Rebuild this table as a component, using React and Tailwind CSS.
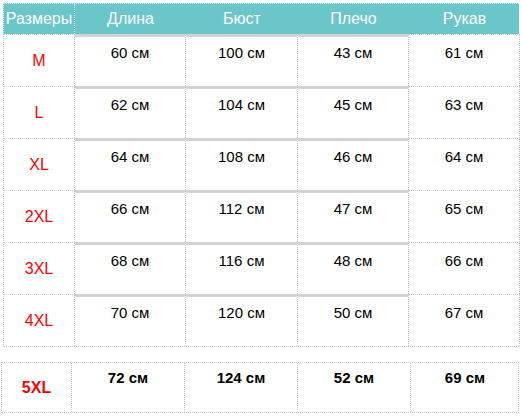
import React from "react";

const headers = ["Размеры", "Длина", "Бюст", "Плечо", "Рукав"];

const rows = [
  ["M", "60 см", "100 см", "43 см", "61 см"],
  ["L", "62 см", "104 см", "45 см", "63 см"],
  ["XL", "64 см", "108 см", "46 см", "64 см"],
  ["2XL", "66 см", "112 см", "47 см", "65 см"],
  ["3XL", "68 см", "116 см", "48 см", "66 см"],
  ["4XL", "70 см", "120 см", "50 см", "67 см"],
];

const last = ["5XL", "72 см", "124 см", "52 см", "69 см"];

const cols = "grid grid-cols-[71px_111px_112px_111px_111px]";

export default function App() {
  return (
    <div
      className="w-[522px] h-[418px] bg-white overflow-hidden"
      style={{ fontFamily: '"Liberation Sans", Arial, sans-serif' }}
    >
      <div className="ml-[3px] mt-[3px] w-[516px]">
        {/* header */}
        <div className={`${cols} h-[31px] bg-[#6bc6ca] border-t border-l border-dotted border-white/70`}>
          {headers.map((h, i) => (
            <div
              key={h}
              className={`flex items-center justify-center text-white text-[16px] ${
                i === 0 ? "border-r border-dotted border-white/70" : ""
              }`}
            >
              {h}
            </div>
          ))}
        </div>

        {/* body */}
        <div className="border-l border-b border-dotted border-[#c8c8c8]">
          {rows.map((r) => (
            <div key={r[0]} className={`${cols} h-[52px]`}>
              {r.map((c, i) => {
                const mid = i >= 1 && i <= 3;
                if (i === 0)
                  return (
                    <div
                      key={i}
                      className="border-t border-r border-dotted border-[#c8c8c8] flex items-center justify-center text-[#ff0000] text-[16px]"
                    >
                      {c}
                    </div>
                  );
                if (mid)
                  return (
                    <div key={i} className="border-r border-dotted border-[#c8c8c8]">
                      <div className="h-[3px] bg-[#d2d2d2]" />
                      <div className="text-center text-black text-[15px] leading-[17px] pt-[7px]">{c}</div>
                    </div>
                  );
                return (
                  <div
                    key={i}
                    className="border-t border-r border-dotted border-[#c8c8c8] text-center text-black text-[15px] leading-[17px] pt-[9px]"
                  >
                    {c}
                  </div>
                );
              })}
            </div>
          ))}
        </div>
      </div>

      {/* separate last row */}
      <div className="ml-[1px] mt-[15px] w-[518px] h-[51px] grid grid-cols-[70px_113px_113px_113px_108px] border border-dotted border-[#c8c8c8]">
        {last.map((c, i) => (
          <div
            key={i}
            className={`${i < 4 ? "border-r border-dotted border-[#c8c8c8]" : ""} ${
              i === 0
                ? "flex items-center justify-center text-[#ff0000] text-[16px] font-bold"
                : "text-center text-black text-[15px] font-bold leading-[17px] pt-[6px]"
            }`}
          >
            {c}
          </div>
        ))}
      </div>
    </div>
  );
}
